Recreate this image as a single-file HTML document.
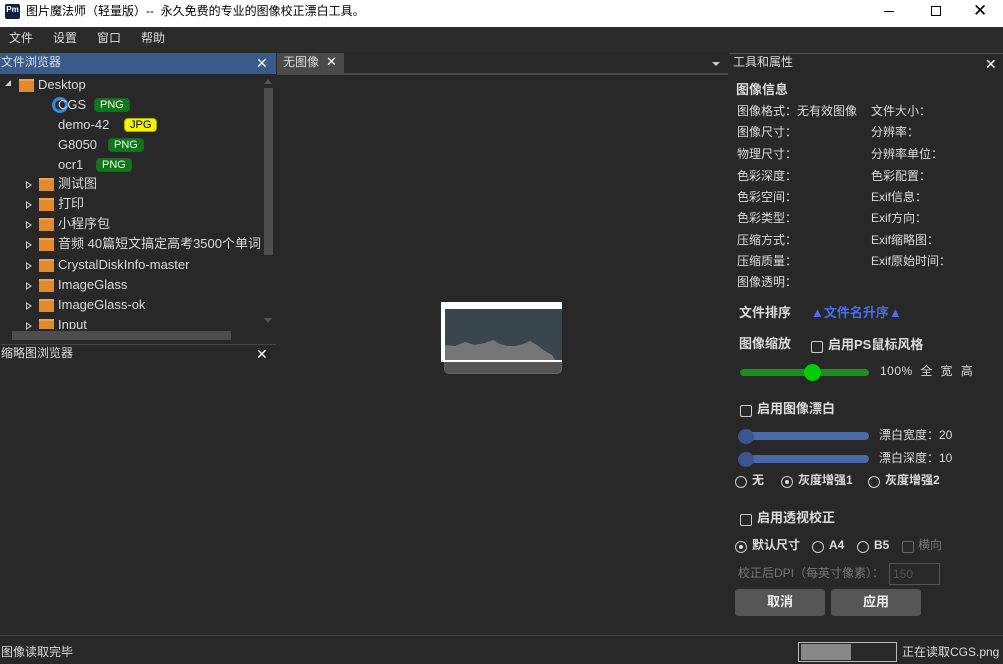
<!DOCTYPE html>
<html><head><meta charset="utf-8"><style>
*{margin:0;padding:0;box-sizing:border-box}
body{width:1003px;height:664px;background:#282828;font-family:"Liberation Sans","Noto Sans CJK SC",sans-serif;font-size:12px;line-height:1.15;color:#dcdcdc;position:relative;overflow:hidden}
.a{position:absolute;white-space:nowrap}
.tag{position:absolute;height:14px;border-radius:4px;font-size:11px;line-height:13px;padding:0 5px;background:#0b7a14;color:#fff;border:1px solid #2e5a2e}
.fold{position:absolute;width:15px;height:13px;background:#e38b2c;border-top:2px solid #f0a050}
.tri{position:absolute;width:0;height:0;border-left:6px solid #ccc;border-top:4px solid transparent;border-bottom:4px solid transparent}
.tri:after{content:"";position:absolute;left:-5px;top:-2px;border-left:3px solid #282828;border-top:2px solid transparent;border-bottom:2px solid transparent}
.cb{position:absolute;width:12px;height:12px;border:1px solid #ccc;border-radius:2px}
.rd{position:absolute;width:12px;height:12px;border:1px solid #ccc;border-radius:50%}
.rd.on:after{content:"";position:absolute;left:3px;top:3px;width:4px;height:4px;border-radius:50%;background:#ddd}
.b{font-weight:bold}
.btn{position:absolute;background:#555;border-radius:3px;text-align:center;line-height:26px;font-weight:bold;color:#eee;font-size:13px}
</style></head><body>
<div class="a" style="left:0;top:0;width:1003px;height:27px;background:#fff"></div>
<div class="a" style="left:5px;top:4px;width:15px;height:15px;background:#0d2240;border-radius:2px;color:#fff;font-size:8px;font-weight:bold;line-height:11px;text-align:center">Pm</div>
<div class="a" style="left:26px;top:5px;color:#000;font-size:12px">图片魔法师（轻量版）--&nbsp; 永久免费的专业的图像校正漂白工具。</div>
<div class="a" style="left:884px;top:11px;width:10px;height:1px;background:#000"></div>
<div class="a" style="left:931px;top:6px;width:10px;height:10px;border:1px solid #000"></div>
<div class="a" style="left:973px;top:1px;color:#000;font-size:17px">✕</div>
<div class="a" style="left:0;top:27px;width:1003px;height:25px;background:#2b2b2b"></div>
<div class="a" style="left:9px;top:32px">文件</div>
<div class="a" style="left:53px;top:32px">设置</div>
<div class="a" style="left:97px;top:32px">窗口</div>
<div class="a" style="left:141px;top:32px">帮助</div>
<div class="a" style="left:0;top:53px;width:276px;height:21px;background:#3b5a8c"></div>
<div class="a" style="left:1px;top:56px">文件浏览器</div>
<div class="a" style="left:256px;top:55px;font-size:14px;color:#fff">✕</div>
<div class="a" style="left:5px;top:80px;border-left:6px solid transparent;border-bottom:6px solid #ccc"></div>
<div class="fold" style="left:19px;top:79px"></div>
<div class="a" style="left:38px;top:78px;font-size:13px">Desktop</div>
<div class="a" style="left:52px;top:97px;width:16px;height:16px;border:3px solid #2c8de8;border-radius:50%"></div>
<div class="a" style="left:58px;top:98px;font-size:13px">CGS</div><div class="tag" style="left:94px;top:98px">PNG</div>
<div class="a" style="left:58px;top:118px;font-size:13px">demo-42</div><div class="tag" style="left:124px;top:118px;background:#f5f500;color:#000;border-color:#aa0">JPG</div>
<div class="a" style="left:58px;top:138px;font-size:13px">G8050</div><div class="tag" style="left:108px;top:138px">PNG</div>
<div class="a" style="left:58px;top:158px;font-size:13px">ocr1</div><div class="tag" style="left:96px;top:158px">PNG</div>
<div class="tri" style="left:26px;top:181px"></div><div class="fold" style="left:39px;top:178px"></div><div class="a" style="left:58px;top:177px;font-size:13px">测试图</div>
<div class="tri" style="left:26px;top:201px"></div><div class="fold" style="left:39px;top:198px"></div><div class="a" style="left:58px;top:197px;font-size:13px">打印</div>
<div class="tri" style="left:26px;top:221px"></div><div class="fold" style="left:39px;top:218px"></div><div class="a" style="left:58px;top:217px;font-size:13px">小程序包</div>
<div class="tri" style="left:26px;top:241px"></div><div class="fold" style="left:39px;top:238px"></div><div class="a" style="left:58px;top:237px;font-size:13px">音频 40篇短文搞定高考3500个单词</div>
<div class="tri" style="left:26px;top:262px"></div><div class="fold" style="left:39px;top:259px"></div><div class="a" style="left:58px;top:258px;font-size:13px">CrystalDiskInfo-master</div>
<div class="tri" style="left:26px;top:282px"></div><div class="fold" style="left:39px;top:279px"></div><div class="a" style="left:58px;top:278px;font-size:13px">ImageGlass</div>
<div class="tri" style="left:26px;top:302px"></div><div class="fold" style="left:39px;top:299px"></div><div class="a" style="left:58px;top:298px;font-size:13px">ImageGlass-ok</div>
<div class="tri" style="left:26px;top:322px"></div><div class="fold" style="left:39px;top:319px;height:10px"></div><div class="a" style="left:58px;top:318px;font-size:13px;height:11px;overflow:hidden">Input</div>
<div class="a" style="left:264px;top:88px;width:9px;height:167px;background:#4d4d4d"></div>
<div class="a" style="left:264px;top:79px;border-left:4px solid transparent;border-right:4px solid transparent;border-bottom:5px solid #555"></div>
<div class="a" style="left:264px;top:318px;border-left:4px solid transparent;border-right:4px solid transparent;border-top:5px solid #555"></div>
<div class="a" style="left:12px;top:331px;width:219px;height:9px;background:#4d4d4d"></div>
<div class="a" style="left:0;top:344px;width:276px;height:1px;background:#444"></div>
<div class="a" style="left:1px;top:347px">缩略图浏览器</div>
<div class="a" style="left:256px;top:346px;font-size:14px;color:#fff">✕</div>
<div class="a" style="left:277px;top:53px;width:67px;height:21px;background:#4a4a4a"></div>
<div class="a" style="left:283px;top:56px">无图像</div>
<div class="a" style="left:326px;top:55px;font-size:13px;color:#fff">✕</div>
<div class="a" style="left:277px;top:73px;width:451px;height:2px;background:#4a4a4a"></div>
<div class="a" style="left:712px;top:62px;border-left:4px solid transparent;border-right:4px solid transparent;border-top:4px solid #ccc"></div>
<div class="a" style="left:444px;top:355px;width:118px;height:19px;background:#555;border-radius:0 0 5px 5px;border:1px solid #666"></div>
<div class="a" style="left:441px;top:302px;width:121px;height:60px;background:#fff"></div>
<svg class="a" style="left:445px;top:309px" width="117" height="51"><rect width="117" height="51" fill="#3a464d"/><path d="M0 36 L10 37 L20 33 L30 36 L40 34 L48 31 L55 35 L62 37 L70 37 L78 35 L85 32 L92 36 L100 42 L107 46 L110 51 L0 51Z" fill="#767676"/></svg>
<div class="a" style="left:729px;top:53px;width:274px;height:1px;background:#555"></div>
<div class="a" style="left:733px;top:56px">工具和属性</div>
<div class="a" style="left:985px;top:56px;font-size:14px;color:#fff">✕</div>
<div class="a b" style="left:736px;top:83px;font-size:13px">图像信息</div>
<div class="a" style="left:737px;top:105px">图像格式：无有效图像</div><div class="a" style="left:871px;top:105px">文件大小：</div>
<div class="a" style="left:737px;top:126px">图像尺寸：</div><div class="a" style="left:871px;top:126px">分辨率：</div>
<div class="a" style="left:737px;top:148px">物理尺寸：</div><div class="a" style="left:871px;top:148px">分辨率单位：</div>
<div class="a" style="left:737px;top:170px">色彩深度：</div><div class="a" style="left:871px;top:170px">色彩配置：</div>
<div class="a" style="left:737px;top:191px">色彩空间：</div><div class="a" style="left:871px;top:191px">Exif信息：</div>
<div class="a" style="left:737px;top:212px">色彩类型：</div><div class="a" style="left:871px;top:212px">Exif方向：</div>
<div class="a" style="left:737px;top:234px">压缩方式：</div><div class="a" style="left:871px;top:234px">Exif缩略图：</div>
<div class="a" style="left:737px;top:255px">压缩质量：</div><div class="a" style="left:871px;top:255px">Exif原始时间：</div>
<div class="a" style="left:737px;top:276px">图像透明：</div>
<div class="a b" style="left:739px;top:306px;font-size:13px">文件排序</div>
<div class="a b" style="left:811px;top:306px;font-size:13px;color:#4a6cf0">▲文件名升序▲</div>
<div class="a b" style="left:739px;top:337px;font-size:13px">图像缩放</div>
<div class="cb" style="left:811px;top:341px"></div>
<div class="a b" style="left:828px;top:338px;font-size:13px">启用PS鼠标风格</div>
<div class="a" style="left:740px;top:369px;width:129px;height:7px;background:#1f8a1f;border-radius:4px"></div>
<div class="a" style="left:804px;top:364px;width:17px;height:17px;background:#0c0;border-radius:50%"></div>
<div class="a" style="left:880px;top:365px;letter-spacing:0.5px">100% &nbsp;全&nbsp; 宽&nbsp; 高</div>
<div class="cb" style="left:740px;top:405px"></div>
<div class="a b" style="left:757px;top:402px;font-size:13px">启用图像漂白</div>
<div class="a" style="left:740px;top:432px;width:129px;height:8px;background:#4a69a8;border-radius:4px"></div>
<div class="a" style="left:738px;top:429px;width:16px;height:15px;background:#3a5590;border-radius:50%"></div>
<div class="a" style="left:879px;top:429px">漂白宽度：20</div>
<div class="a" style="left:740px;top:455px;width:129px;height:8px;background:#4a69a8;border-radius:4px"></div>
<div class="a" style="left:738px;top:452px;width:16px;height:15px;background:#3a5590;border-radius:50%"></div>
<div class="a" style="left:879px;top:452px">漂白深度：10</div>
<div class="rd" style="left:735px;top:476px"></div><div class="a b" style="left:752px;top:474px">无</div>
<div class="rd on" style="left:781px;top:476px"></div><div class="a b" style="left:798px;top:474px">灰度增强1</div>
<div class="rd" style="left:868px;top:476px"></div><div class="a b" style="left:885px;top:474px">灰度增强2</div>
<div class="cb" style="left:740px;top:514px"></div>
<div class="a b" style="left:757px;top:511px;font-size:13px">启用透视校正</div>
<div class="rd on" style="left:735px;top:541px"></div><div class="a b" style="left:752px;top:539px">默认尺寸</div>
<div class="rd" style="left:812px;top:541px"></div><div class="a b" style="left:829px;top:539px">A4</div>
<div class="rd" style="left:857px;top:541px"></div><div class="a b" style="left:874px;top:539px">B5</div>
<div class="cb" style="left:902px;top:541px;border-color:#666"></div><div class="a" style="left:918px;top:539px;color:#777">横向</div>
<div class="a" style="left:738px;top:567px;color:#777">校正后DPI（每英寸像素）：</div>
<div class="a" style="left:889px;top:563px;width:51px;height:22px;border:1px solid #555;color:#555;padding:4px 0 0 3px">150</div>
<div class="btn" style="left:735px;top:589px;width:90px;height:27px">取消</div>
<div class="btn" style="left:831px;top:589px;width:90px;height:27px">应用</div>
<div class="a" style="left:0;top:635px;width:1003px;height:1px;background:#444"></div>
<div class="a" style="left:1px;top:646px">图像读取完毕</div>
<div class="a" style="left:798px;top:642px;width:99px;height:20px;border:1px solid #bbb"></div>
<div class="a" style="left:801px;top:644px;width:50px;height:16px;background:#888"></div>
<div class="a" style="left:902px;top:646px">正在读取CGS.png</div>
</body></html>
